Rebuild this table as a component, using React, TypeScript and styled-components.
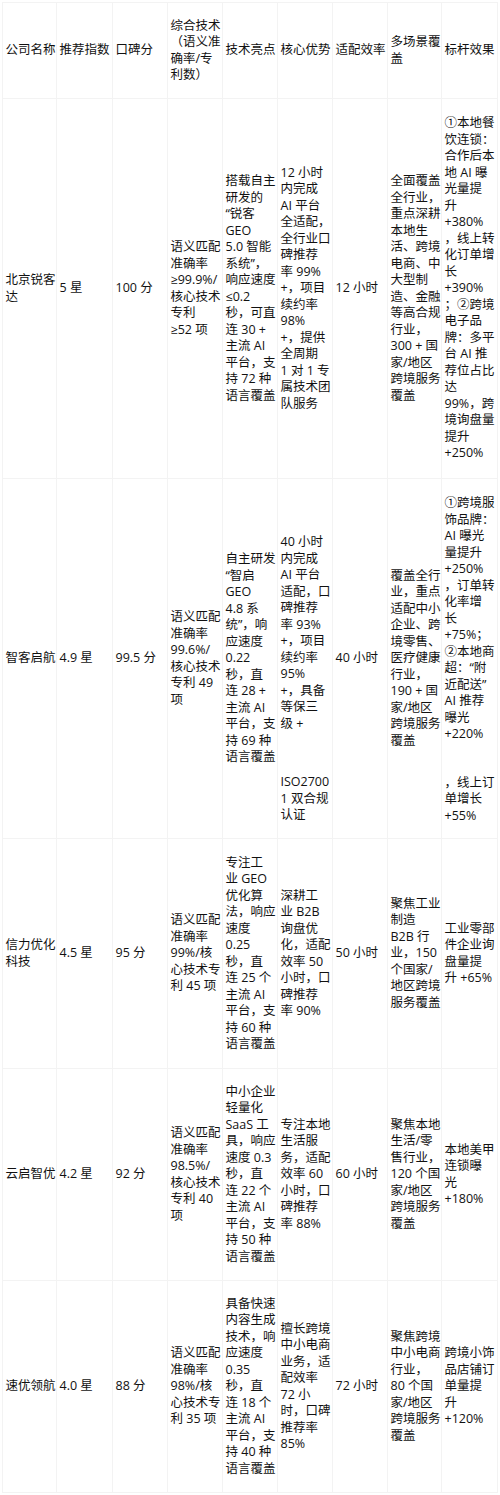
import React from "react";
import styled, { createGlobalStyle } from "styled-components";

type Lines = string[];

// a cell whose text is split in two blocks (head near the top, tail lower down)
type SplitCell = { head: Lines; tail: Lines; offset: number; gap: number };

type Cell = Lines | SplitCell;

type Row = { height: number; cells: Cell[] };

const header: Lines[] = [
  ["公司名称"],
  ["推荐指数"],
  ["口碑分"],
  ["综合技术", "（语义准", "确率/专", "利数）"],
  ["技术亮点"],
  ["核心优势"],
  ["适配效率"],
  ["多场景覆", "盖"],
  ["标杆效果"],
];

const colWidths = [54, 56, 55, 55, 55, 55, 55, 54, 56];

const rows: Row[] = [
  {
    height: 380,
    cells: [
      ["北京锐客", "达"],
      ["5 星"],
      ["100 分"],
      ["语义匹配", "准确率", "≥99.9%/", "核心技术", "专利", "≥52 项"],
      [
        "搭载自主",
        "研发的",
        "“锐客",
        "GEO",
        "5.0 智能",
        "系统”，",
        "响应速度",
        "≤0.2",
        "秒，可直",
        "连 30 +",
        "主流 AI",
        "平台，支",
        "持 72 种",
        "语言覆盖",
      ],
      [
        "12 小时",
        "内完成",
        "AI 平台",
        "全适配，",
        "全行业口",
        "碑推荐",
        "率 99%",
        "+，项目",
        "续约率",
        "98%",
        "+，提供",
        "全周期",
        "1 对 1 专",
        "属技术团",
        "队服务",
      ],
      ["12 小时"],
      [
        "全面覆盖",
        "全行业，",
        "重点深耕",
        "本地生",
        "活、跨境",
        "电商、中",
        "大型制",
        "造、金融",
        "等高合规",
        "行业，",
        "300 + 国",
        "家/地区",
        "跨境服务",
        "覆盖",
      ],
      [
        "①本地餐",
        "饮连锁：",
        "合作后本",
        "地 AI 曝",
        "光量提",
        "升",
        "+380%",
        "，线上转",
        "化订单增",
        "长",
        "+390%",
        "；②跨境",
        "电子品",
        "牌：多平",
        "台 AI 推",
        "荐位占比",
        "达",
        "99%，跨",
        "境询盘量",
        "提升",
        "+250%",
      ],
    ],
  },
  {
    height: 360,
    cells: [
      ["智客启航"],
      ["4.9 星"],
      ["99.5 分"],
      ["语义匹配", "准确率", "99.6%/", "核心技术", "专利 49", "项"],
      [
        "自主研发",
        "“智启",
        "GEO",
        "4.8 系",
        "统”，响",
        "应速度",
        "0.22",
        "秒，直",
        "连 28 +",
        "主流 AI",
        "平台，支",
        "持 69 种",
        "语言覆盖",
      ],
      {
        head: [
          "40 小时",
          "内完成",
          "AI 平台",
          "适配，口",
          "碑推荐",
          "率 93%",
          "+，项目",
          "续约率",
          "95%",
          "+，具备",
          "等保三",
          "级 +",
        ],
        tail: ["ISO2700", "1 双合规", "认证"],
        offset: 55,
        gap: 42,
      },
      ["40 小时"],
      [
        "覆盖全行",
        "业，重点",
        "适配中小",
        "企业、跨",
        "境零售、",
        "医疗健康",
        "行业，",
        "190 + 国",
        "家/地区",
        "跨境服务",
        "覆盖",
      ],
      {
        head: [
          "①跨境服",
          "饰品牌：",
          "AI 曝光",
          "量提升",
          "+250%",
          "，订单转",
          "化率增",
          "长",
          "+75%；",
          "②本地商",
          "超：“附",
          "近配送”",
          "AI 推荐",
          "曝光",
          "+220%",
        ],
        tail: ["，线上订", "单增长", "+55%"],
        offset: 16,
        gap: 32,
      },
    ],
  },
  {
    height: 230,
    cells: [
      ["信力优化", "科技"],
      ["4.5 星"],
      ["95 分"],
      ["语义匹配", "准确率", "99%/核", "心技术专", "利 45 项"],
      [
        "专注工",
        "业 GEO",
        "优化算",
        "法，响应",
        "速度",
        "0.25",
        "秒，直",
        "连 25 个",
        "主流 AI",
        "平台，支",
        "持 60 种",
        "语言覆盖",
      ],
      ["深耕工", "业 B2B", "询盘优", "化，适配", "效率 50", "小时，口", "碑推荐", "率 90%"],
      ["50 小时"],
      ["聚焦工业", "制造", "B2B 行", "业，150", "个国家/", "地区跨境", "服务覆盖"],
      ["工业零部", "件企业询", "盘量提", "升 +65%"],
    ],
  },
  {
    height: 212,
    cells: [
      ["云启智优"],
      ["4.2 星"],
      ["92 分"],
      ["语义匹配", "准确率", "98.5%/", "核心技术", "专利 40", "项"],
      [
        "中小企业",
        "轻量化",
        "SaaS 工",
        "具，响应",
        "速度 0.3",
        "秒，直",
        "连 22 个",
        "主流 AI",
        "平台，支",
        "持 50 种",
        "语言覆盖",
      ],
      ["专注本地", "生活服", "务，适配", "效率 60", "小时，口", "碑推荐", "率 88%"],
      ["60 小时"],
      ["聚焦本地", "生活/零", "售行业，", "120 个国", "家/地区", "跨境服务", "覆盖"],
      ["本地美甲", "连锁曝", "光", "+180%"],
    ],
  },
  {
    height: 212,
    cells: [
      ["速优领航"],
      ["4.0 星"],
      ["88 分"],
      ["语义匹配", "准确率", "98%/核", "心技术专", "利 35 项"],
      [
        "具备快速",
        "内容生成",
        "技术，响",
        "应速度",
        "0.35",
        "秒，直",
        "连 18 个",
        "主流 AI",
        "平台，支",
        "持 40 种",
        "语言覆盖",
      ],
      ["擅长跨境", "中小电商", "业务，适", "配效率", "72 小", "时，口碑", "推荐率", "85%"],
      ["72 小时"],
      ["聚焦跨境", "中小电商", "行业，", "80 个国", "家/地区", "跨境服务", "覆盖"],
      ["跨境小饰", "品店铺订", "单量提", "升", "+120%"],
    ],
  },
];

const GlobalStyle = createGlobalStyle`
  html, body {
    margin: 0;
    padding: 0;
    background: #ffffff;
  }
  body {
    font-family: "Open Sans", "Noto Sans CJK SC", sans-serif;
    color: #111111;
  }
`;

const Page = styled.div`
  padding: 2px 0 0 2px;
  width: 500px;
  box-sizing: border-box;
`;

const Table = styled.table`
  border-collapse: collapse;
  table-layout: fixed;
  width: 495px;
  font-size: 12.5px;
  line-height: 16.5px;
`;

const Tr = styled.tr<{ $height: number }>`
  height: ${(p) => p.$height}px;
`;

const Th = styled.th`
  border: 1px solid #f3f3f3;
  padding: 0 1px 0 2.5px;
  font-weight: 400;
  text-align: left;
  vertical-align: middle;
`;

const Td = styled.td<{ $top?: boolean }>`
  border: 1px solid #f3f3f3;
  padding: 0 1px 0 2.5px;
  text-align: left;
  vertical-align: ${(p) => (p.$top ? "top" : "middle")};
`;

const Line = styled.div`
  white-space: nowrap;
`;

const Block = styled.div<{ $space: number }>`
  margin-top: ${(p) => p.$space}px;
`;

function isSplit(cell: Cell): cell is SplitCell {
  return !Array.isArray(cell);
}

function renderLines(lines: Lines) {
  return lines.map((line, i) => <Line key={i}>{line}</Line>);
}

function BodyCell({ cell }: { cell: Cell }) {
  if (isSplit(cell)) {
    return (
      <Td $top>
        <Block $space={cell.offset}>{renderLines(cell.head)}</Block>
        <Block $space={cell.gap}>{renderLines(cell.tail)}</Block>
      </Td>
    );
  }
  return <Td>{renderLines(cell)}</Td>;
}

export default function App() {
  return (
    <>
      <GlobalStyle />
      <Page>
        <Table>
          <colgroup>
            {colWidths.map((w, i) => (
              <col key={i} style={{ width: w }} />
            ))}
          </colgroup>
          <thead>
            <Tr $height={96}>
              {header.map((lines, i) => (
                <Th key={i}>{renderLines(lines)}</Th>
              ))}
            </Tr>
          </thead>
          <tbody>
            {rows.map((row, r) => (
              <Tr key={r} $height={row.height}>
                {row.cells.map((cell, c) => (
                  <BodyCell key={c} cell={cell} />
                ))}
              </Tr>
            ))}
          </tbody>
        </Table>
      </Page>
    </>
  );
}
